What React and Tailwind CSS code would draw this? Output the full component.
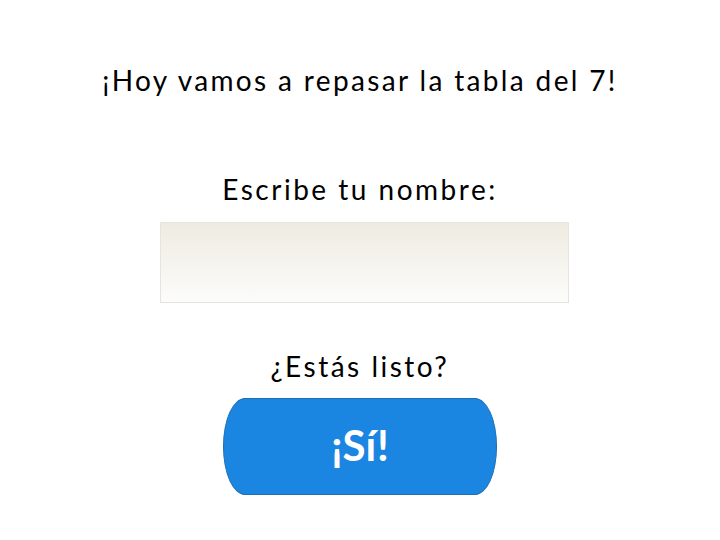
export default function App() {
  return (
    <div className="w-[720px] h-[540px] bg-white flex flex-col items-center font-['Lato',sans-serif] text-black">
      <h1 className="mt-[60px] text-[28px] leading-[40px] font-normal tracking-[2.35px]">¡Hoy vamos a repasar la tabla del 7!</h1>
      <p className="mt-[69px] text-[28px] leading-[40px] tracking-[2.5px]">Escribe tu nombre:</p>
      <input
        type="text"
        className="mt-[13px] ml-[8px] w-[409px] h-[81px] border border-[#e6e4dc] bg-gradient-to-b from-[#eeebe1] to-[#fcfcfa] outline-none"
      />
      <p className="mt-[43px] text-[28px] leading-[40px] tracking-[2.5px]">¿Estás listo?</p>
      <button className="mt-[12px] w-[274px] h-[97px] rounded-[22px/48px] bg-[#1b86e2] border border-[#1f6fb5] text-white text-[42px] font-bold leading-none pb-[4px]">
        ¡Sí!
      </button>
    </div>
  );
}
